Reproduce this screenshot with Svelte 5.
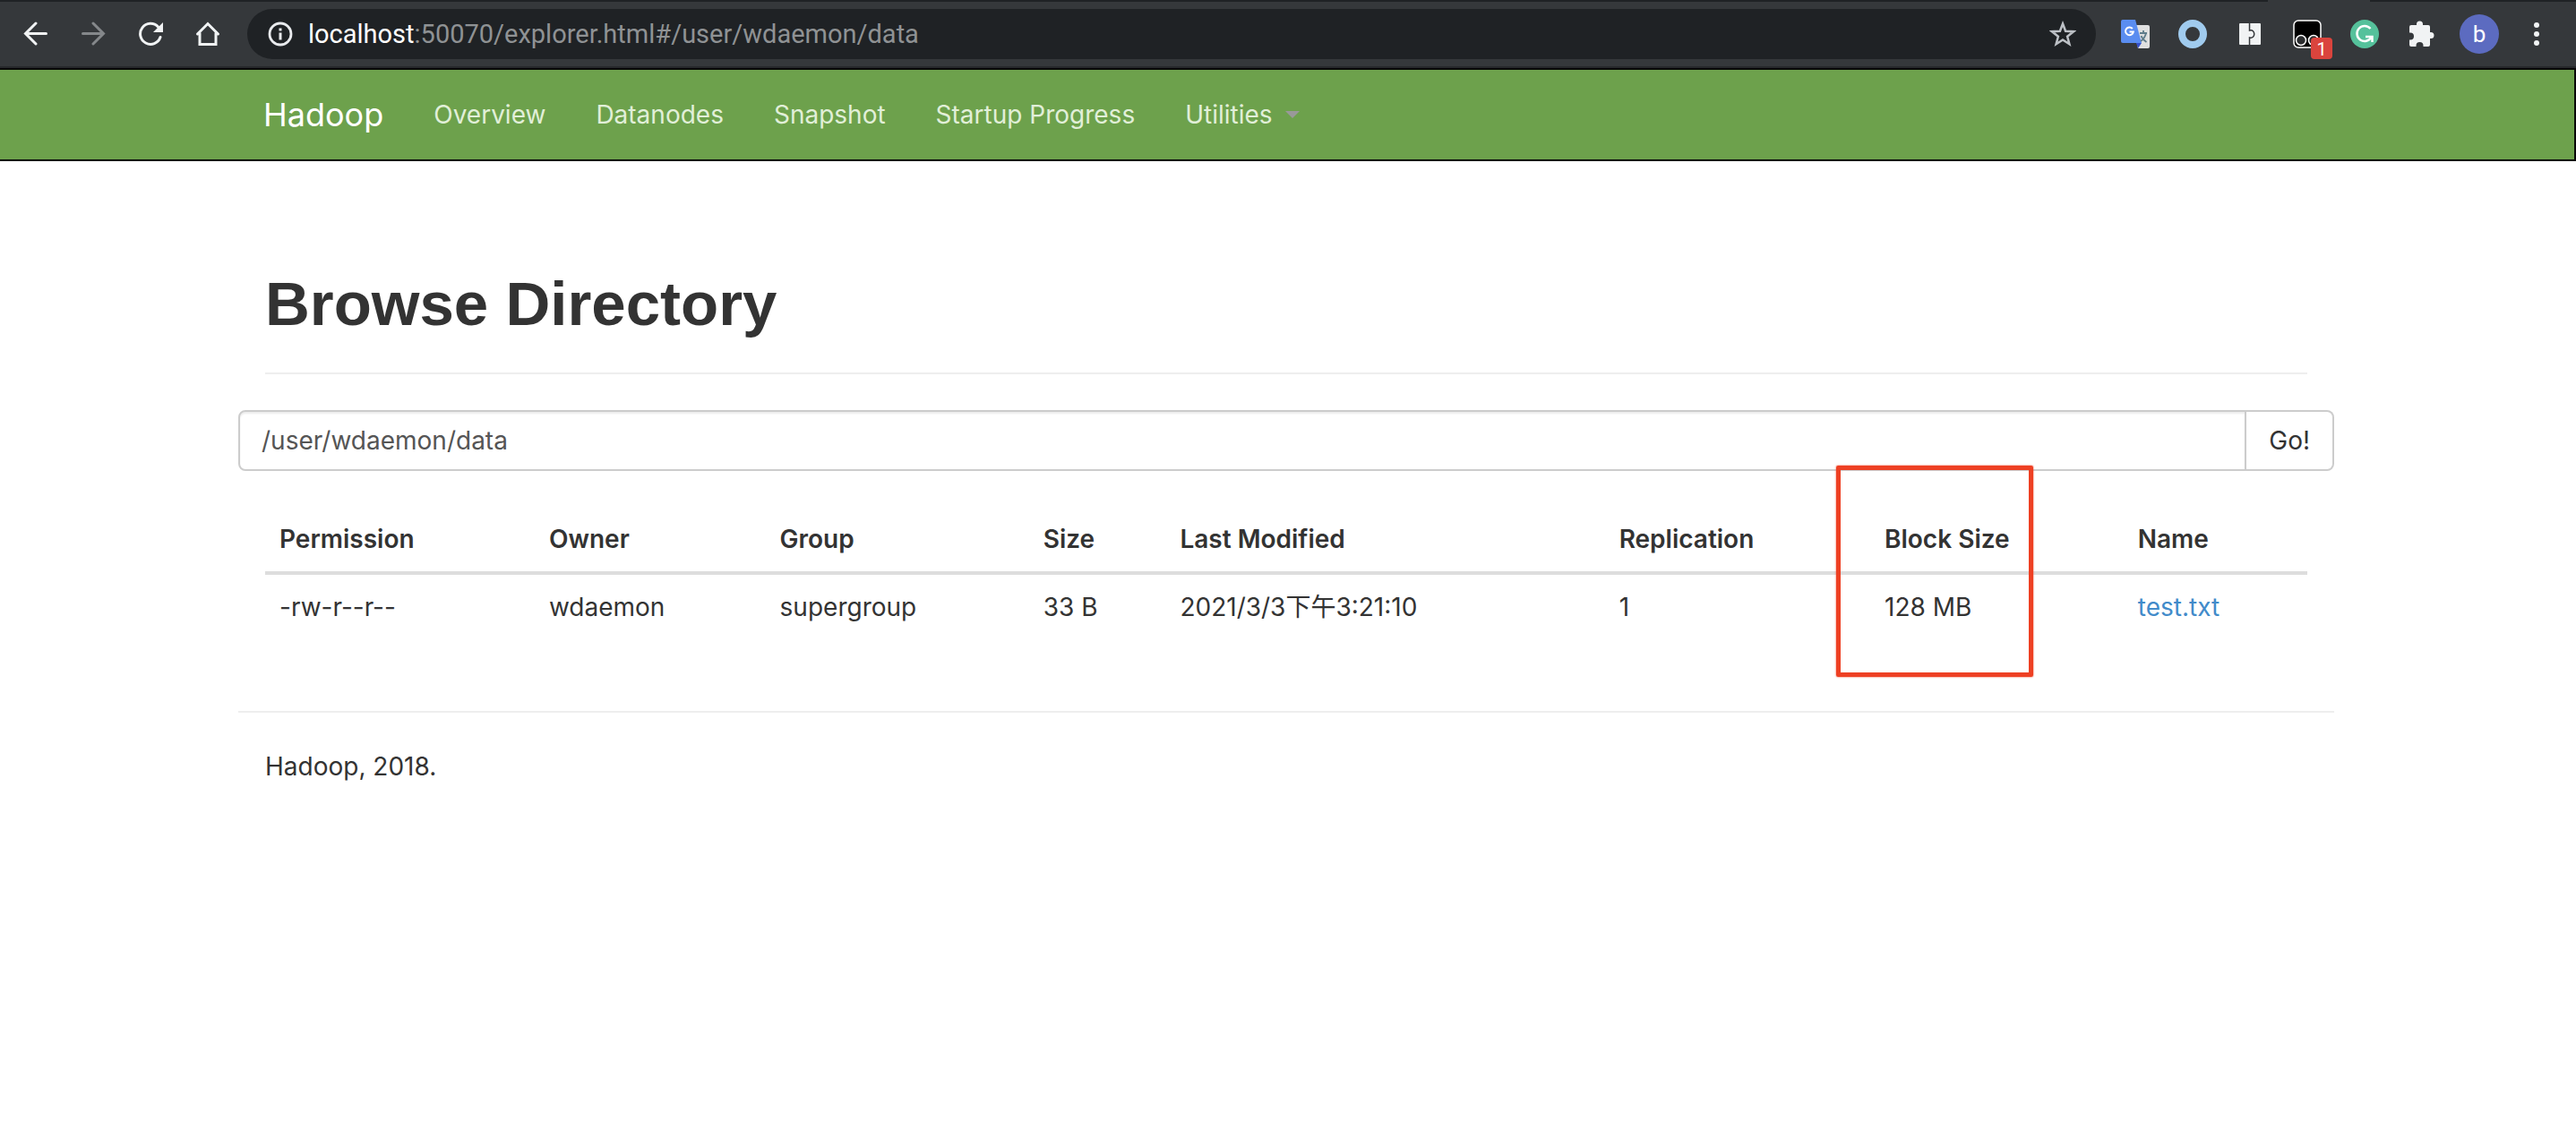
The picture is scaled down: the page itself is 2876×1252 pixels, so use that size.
<script>
  const nav = ['Overview', 'Datanodes', 'Snapshot', 'Startup Progress'];
  const columns = [
    { title: 'Permission', share: 13.2 },
    { title: 'Owner', share: 11.3 },
    { title: 'Group', share: 12.9 },
    { title: 'Size', share: 6.7 },
    { title: 'Last Modified', share: 21.5 },
    { title: 'Replication', share: 13 },
    { title: 'Block Size', share: 12.4 },
    { title: 'Name', share: 9 }
  ];
  const files = [
    { cells: ['-rw-r--r--', 'wdaemon', 'supergroup', '33 B', '2021/3/3下午3:21:10', '1', '128 MB'], name: 'test.txt' }
  ];
  let path = $state('/user/wdaemon/data');
</script>

<header class="toolbar">
  <div class="tools">
    <button aria-label="Back"><svg width="28" height="28" viewBox="0 0 28 28" fill="none" stroke="#f1f3f4" stroke-width="3" stroke-linecap="round"><path d="M25.500 13.500H3M14 2L2.500 13.500 14 25" /></svg></button>
    <button aria-label="Forward"><svg width="28" height="28" viewBox="0 0 28 28" fill="none" stroke="#85888b" stroke-width="3" stroke-linecap="round"><path d="M2.500 13.500H25M14 2l11.500 11.500L14 25" /></svg></button>
    <button aria-label="Reload"><svg width="28" height="28" viewBox="0 0 28 28"><path d="M25 17.500A11.500 11.500 0 1 1 22.500 6" fill="none" stroke="#f1f3f4" stroke-width="3" stroke-linecap="round" /><path d="M28 1v11H17z" fill="#f1f3f4" /></svg></button>
    <button aria-label="Home"><svg width="28" height="28" viewBox="0 0 28 28" fill="none" stroke="#f1f3f4" stroke-width="3" stroke-linecap="round"><path d="M2.500 14L14 2.500 25.500 14M5 13v12.500h18V13" /></svg></button>
  </div>
  <div class="address">
    <svg width="30" height="30" viewBox="0 0 30 30"><circle cx="15" cy="15" r="12" fill="none" stroke="#e8eaed" stroke-width="2.800" /><path d="M13.500 8.500h3v3h-3zM13.500 13.500h3v8h-3z" fill="#e8eaed" /></svg>
    <span class="url"><b>localhost</b>:50070/explorer.html#/user/wdaemon/data</span>
    <button aria-label="Bookmark"><svg width="30" height="30" viewBox="0 0 30 30"><path d="M15 3.500l3.100 8.200 8.900.5-6.900 5.500 2.300 8.600L15 21.500l-7.400 4.800 2.300-8.600L3 12.200l8.900-.5z" fill="none" stroke="#bdc1c6" stroke-width="2.500" /></svg></button>
  </div>
  <div class="extensions">
    <button aria-label="Translate"><svg width="32" height="32" viewBox="0 0 32 32"><path d="M13 6h17a2 2 0 0 1 2 2v22a2 2 0 0 1-2 2H19z" fill="#e0e0e0" /><path d="M17 26h6l-4 6z" fill="#3550c8" /><path d="M2 0h14l7 26H2a2 2 0 0 1-2-2V2a2 2 0 0 1 2-2z" fill="#5a8df0" /><path d="M12.800 10A4.400 4.400 0 1 0 13.800 13.500H9.500" fill="none" stroke="#fff" stroke-width="2" /><path d="M21 15h8M25 12v3M28 15c-1 4-3 7-6 9M22.500 18c1 3 3 5 6 7" fill="none" stroke="#607d8b" stroke-width="1.800" /></svg></button>
    <button aria-label="Circle extension"><svg width="32" height="32" viewBox="0 0 32 32"><circle cx="16" cy="16" r="12" fill="none" stroke="#a0cbee" stroke-width="8" /></svg></button>
    <button aria-label="Split extension"><svg width="24" height="24" viewBox="0 0 24 24"><rect width="24" height="24" rx="1" fill="#f1f3f4" /><path d="M11.500 0v8c7-2 7 10 0 8v8" fill="none" stroke="#35383b" stroke-width="1.500" /></svg></button>
    <button class="badged" aria-label="Scripts, 1 active"><svg width="32" height="32" viewBox="0 0 32 32"><rect x="1" y="1" width="30" height="30" rx="5" fill="#000" stroke="#fff" stroke-width="1.500" /><g fill="#2b2d2f" stroke="#fff" stroke-width="1.500"><circle cx="9" cy="23" r="5.500" /><circle cx="23" cy="23" r="5.500" /></g></svg><span class="badge">1</span></button>
    <button aria-label="Grammar"><svg width="32" height="32" viewBox="0 0 32 32"><circle cx="16" cy="16" r="16" fill="#55c19b" /><path d="M22.500 10A8.500 8.500 0 1 0 23.500 19.500M17 19h7.500v6" fill="none" stroke="#fff" stroke-width="2.500" /></svg></button>
    <button aria-label="Extensions"><svg width="30" height="30" viewBox="0 0 30 30"><path d="M3 5h6V4a3.500 3.500 0 0 1 7 0v1h6a2 2 0 0 1 2 2v6h1a3.500 3.500 0 0 1 0 7h-1v7a2 2 0 0 1-2 2h-5.500v-1a4 4 0 0 0-8 0v1H3a2 2 0 0 1-2-2v-5.500h1a4 4 0 0 0 0-8H1V7a2 2 0 0 1 2-2z" fill="#f1f3f4" /></svg></button>
    <button class="avatar">b</button>
    <button aria-label="Menu"><svg width="8" height="28" viewBox="0 0 8 28" fill="#f1f3f4"><circle cx="4" cy="4" r="3" /><circle cx="4" cy="14" r="3" /><circle cx="4" cy="24" r="3" /></svg></button>
  </div>
</header>

<nav class="navbar">
  <div class="container links">
    <a class="brand" href="#/">Hadoop</a>
    {#each nav as item}
      <a href="#/">{item}</a>
    {/each}
    <a class="dropdown" href="#/">Utilities <span class="caret"></span></a>
  </div>
</nav>

<main>
  <div class="container">
    <div class="inner"><h1>Browse Directory</h1></div>
    <form class="path" onsubmit={(e) => e.preventDefault()}>
      <input aria-label="Directory" bind:value={path} />
      <button type="submit">Go!</button>
    </form>
    <div class="inner">
      <table>
        <colgroup>
          {#each columns as column}<col style="width: {column.share}%" />{/each}
        </colgroup>
        <thead>
          <tr>
            {#each columns as column}
              <th class:marked={column.title === 'Block Size'}>{column.title}</th>
            {/each}
          </tr>
        </thead>
        <tbody>
          {#each files as file}
            <tr>
              {#each file.cells as cell}<td>{cell}</td>{/each}
              <td><a href="#/">{file.name}</a></td>
            </tr>
          {/each}
        </tbody>
      </table>
    </div>
    <footer>Hadoop, 2018.</footer>
  </div>
</main>

<style>
  :global(body) { background: #fff; }
  :global(#app) { font: 28px/40px Inter, "Noto Sans CJK SC", sans-serif; color: #333; }
  button { font: inherit; color: inherit; background: none; border: 0; padding: 0; }
  a { text-decoration: none; color: #428bca; }
  svg { display: block; }

  .toolbar { position: relative; box-sizing: border-box; height: 76px; display: flex; align-items: center; background: #35383b; border-top: 2px solid #1f2225; border-bottom: 2px solid #27292c; padding-right: 12px; }
  /* the active tab joins the toolbar here */
  .toolbar::before { content: ""; position: absolute; top: -2px; right: 230px; width: 114px; height: 2px; background: #35383b; }
  .tools { display: flex; gap: 36px; padding: 0 30px 0 26px; }
  .address { flex: 1; height: 56px; display: flex; align-items: center; border-radius: 28px; background: #1f2225; padding: 0 22px; color: #8f9294; font-family: Roboto, sans-serif; font-size: 29px; }
  .url { flex: 1; padding-left: 16px; }
  .url b { font-weight: 400; color: #fff; }
  .extensions { display: grid; grid-template-columns: repeat(8, 64px); place-items: center; padding-left: 12px; }
  .badged { position: relative; }
  .badge { position: absolute; left: 20px; top: 20px; width: 24px; height: 24px; border-radius: 4px; background: #da443d; color: #fff; font: 20px/26px Roboto, sans-serif; }
  .avatar { width: 44px; height: 44px; border-radius: 50%; background: #5c6bc0; color: #fff; font: 26px/44px Roboto, sans-serif; }

  .navbar { background: #6da14c; border: 2px solid #080808; border-left: 0; padding-right: 2px; }
  main { padding-right: 4px; }
  .container { width: calc(100% - 532px); margin: 0 auto; }
  .links { display: flex; height: 100px; align-items: center; padding-left: 28px; box-sizing: border-box; }
  .links a { padding: 0 28px; color: #e1efd8; }
  .links .brand { font-size: 36px; color: #fff; padding-left: 0; }
  .links .dropdown { display: flex; align-items: center; gap: 14px; }
  .caret { border: 8px solid transparent; border-top-color: #999; border-bottom: 0; }

  .inner { padding: 0 30px; }
  h1 { margin: 0 0 40px; padding: 120px 0 36px; font: bold 69px/80px "Liberation Sans", sans-serif; border-bottom: 2px solid #eee; }
  .path { display: flex; }
  .path input { flex: 1; min-width: 0; box-sizing: border-box; height: 68px; border: 2px solid #ccc; border-radius: 8px 0 0 8px; padding: 0 24px; font: inherit; color: #555; box-shadow: inset 0 2px 2px rgba(0, 0, 0, 0.08); }
  .path button { height: 68px; border: 2px solid #ccc; border-left: 0; border-radius: 0 8px 8px 0; padding: 0 25px; }
  table { width: 100%; table-layout: fixed; border-collapse: collapse; margin-top: 40px; }
  th, td { text-align: left; padding: 16px; line-height: 40px; white-space: nowrap; }
  th { font-weight: 600; border-bottom: 4px solid #ddd; }
  .marked { position: relative; }
  .marked::after { content: ""; box-sizing: border-box; position: absolute; left: -38px; top: -46px; width: 220px; height: 236px; border: 5px solid #ee4023; border-radius: 2px; box-shadow: 0 0 2px #ee4023; }
  footer { margin-top: 80px; border-top: 2px solid #eee; padding: 40px 30px; }
</style>
